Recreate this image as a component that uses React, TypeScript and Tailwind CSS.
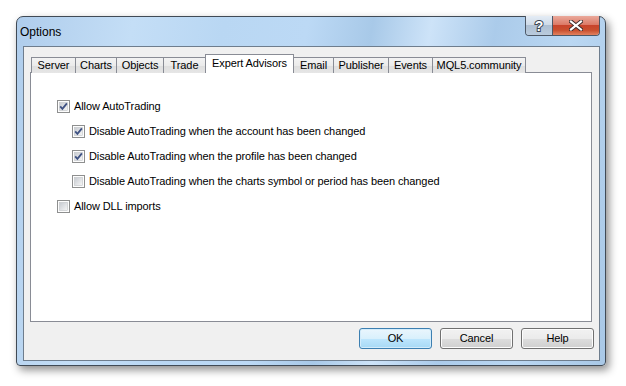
const tabs = [
  { label: "Server", w: 45 },
  { label: "Charts", w: 41 },
  { label: "Objects", w: 47 },
  { label: "Trade", w: 42 },
  { label: "Expert Advisors", w: 88, active: true },
  { label: "Email", w: 40 },
  { label: "Publisher", w: 55 },
  { label: "Events", w: 44 },
  { label: "MQL5.community", w: 93 },
];

const Check = ({ on }: { on: boolean }) => (
  <svg width="13" height="13" viewBox="0 0 13 13" className="shrink-0">
    <defs>
      <linearGradient id="cbg" x1="0" y1="0" x2="1" y2="1">
        <stop offset="0" stopColor="#c6cad0" />
        <stop offset="1" stopColor="#f7f7f7" />
      </linearGradient>
    </defs>
    <rect x="0.5" y="0.5" width="12" height="12" fill="#fdfdfd" stroke="#8e8f8f" />
    <rect x="2.5" y="2.5" width="8" height="8" fill="url(#cbg)" stroke="#c0c3c7" strokeWidth="0.6" />
    {on && <path d="M3.2 6.3 L5.4 8.8 L9.9 3.4" fill="none" stroke="#3f5283" strokeWidth="1.8" />}
  </svg>
);

const Row = ({ on, label, sub }: { on: boolean; label: string; sub?: boolean }) => (
  <div className={`flex items-center gap-[4px] h-[13px] ${sub ? "pl-[15px]" : ""}`}>
    <Check on={on} />
    <span className="leading-[13px]">{label}</span>
  </div>
);

const Btn = ({ label, focus }: { label: string; focus?: boolean }) => (
  <div
    className={`w-[73px] h-[21px] rounded-[3px] border flex items-center justify-center ${
      focus
        ? "border-[#3c7fb1] bg-[linear-gradient(#eaf6fd_0%,#d9f0fc_50%,#bee6fd_51%,#a7d9f5_100%)] shadow-[inset_0_0_0_1px_#d3ecfb]"
        : "border-[#707070] bg-[linear-gradient(#f2f2f2_0%,#ebebeb_50%,#dddddd_51%,#cfcfcf_100%)] shadow-[inset_0_0_0_1px_#fcfcfc]"
    }`}
  >
    {label}
  </div>
);

export default function App() {
  return (
    <div
      className="w-[626px] h-[386px] bg-white pt-[16px] pl-[16px] text-[11px] tracking-[-0.1px] text-black"
      style={{ fontFamily: '"Liberation Sans", Arial, sans-serif' }}
    >
      <div className="w-[590px] h-[350px] flex flex-col rounded-t-[7px] rounded-b-[4px] border border-[#404a55] bg-[linear-gradient(100deg,#afcdec_0%,#c4def6_18%,#b9d7f3_32%,#bcd9f5_45%,#a8c9e8_55%,#cde3f8_64%,#abcbea_74%,#bad7f2_86%,#a9c8e6_100%)] shadow-[3px_4px_9px_rgba(0,0,0,0.45)]">
        <div className="h-[29px] flex items-start shrink-0">
          <div className="pl-[3px] pt-[7px] text-[12px] tracking-normal leading-[16px]">Options</div>
          <div className="ml-auto mr-[5px] mt-[-1px] flex h-[20px] rounded-b-[4px] border border-t-0 border-[#4d5866] overflow-hidden">
            <div className="w-[27px] border-r border-[#4d5866] bg-[linear-gradient(#e4ecf5_0%,#cfdbe8_45%,#aebfd2_50%,#b9cbdd_100%)] flex items-center justify-center">
              <svg width="12" height="16" viewBox="0 0 12 16">
                <text
                  x="6"
                  y="13"
                  textAnchor="middle"
                  fontSize="14"
                  fontWeight="bold"
                  fontFamily="Liberation Sans, Arial, sans-serif"
                  fill="#ffffff"
                  stroke="#3c4654"
                  strokeWidth="2"
                  paintOrder="stroke"
                >
                  ?
                </text>
              </svg>
            </div>
            <div className="w-[46px] bg-[linear-gradient(#eaa99b_0%,#dc7b68_45%,#c8442c_50%,#c9502f_75%,#e2825f_100%)] flex items-center justify-center">
              <svg width="14" height="11" viewBox="0 0 14 11">
                <path d="M2 1.5 L12 9.5 M12 1.5 L2 9.5" stroke="#3b2a2a" strokeWidth="4" strokeLinecap="square" />
                <path d="M2 1.5 L12 9.5 M12 1.5 L2 9.5" stroke="#ffffff" strokeWidth="2.2" strokeLinecap="square" />
              </svg>
            </div>
          </div>
        </div>
        <div className="ml-[6px] mr-[5px] mb-[4px] flex-1 border border-[#6e7d8d] bg-[#f0f0f0] flex flex-col">
          <div className="pt-[7px] pl-[6px] pr-[7px]">
            <div className="flex items-end h-[19px] pl-[1px] relative z-10 mb-[-1px]">
              {tabs.map((t, i) =>
                t.active ? (
                  <div
                    key={t.label}
                    style={{ width: t.w + 1 }}
                    className="h-[19px] bg-white border border-b-0 border-[#898c95] flex items-start justify-center pt-[2px] leading-[13px] -ml-px"
                  >
                    {t.label}
                  </div>
                ) : (
                  <div
                    key={t.label}
                    style={{ width: i === 0 ? t.w : t.w + 1 }}
                    className="h-[16px] bg-[linear-gradient(#f3f3f3_0%,#ebebeb_50%,#dedede_51%,#e6e6e6_100%)] border border-b-0 border-[#898c95] flex items-center justify-center leading-[13px] -ml-px first:ml-0"
                  >
                    {t.label}
                  </div>
                )
              )}
            </div>
            <div className="h-[250px] bg-white border border-[#898c95] pt-[27px] pl-[26px] flex flex-col gap-[12px]">
              <Row on label="Allow AutoTrading" />
              <Row on sub label="Disable AutoTrading when the account has been changed" />
              <Row on sub label="Disable AutoTrading when the profile has been changed" />
              <Row on={false} sub label="Disable AutoTrading when the charts symbol or period has been changed" />
              <Row on={false} label="Allow DLL imports" />
            </div>
          </div>
          <div className="flex justify-end gap-[8px] pr-[5px] mt-[6px]">
            <Btn label="OK" focus />
            <Btn label="Cancel" />
            <Btn label="Help" />
          </div>
        </div>
      </div>
    </div>
  );
}
